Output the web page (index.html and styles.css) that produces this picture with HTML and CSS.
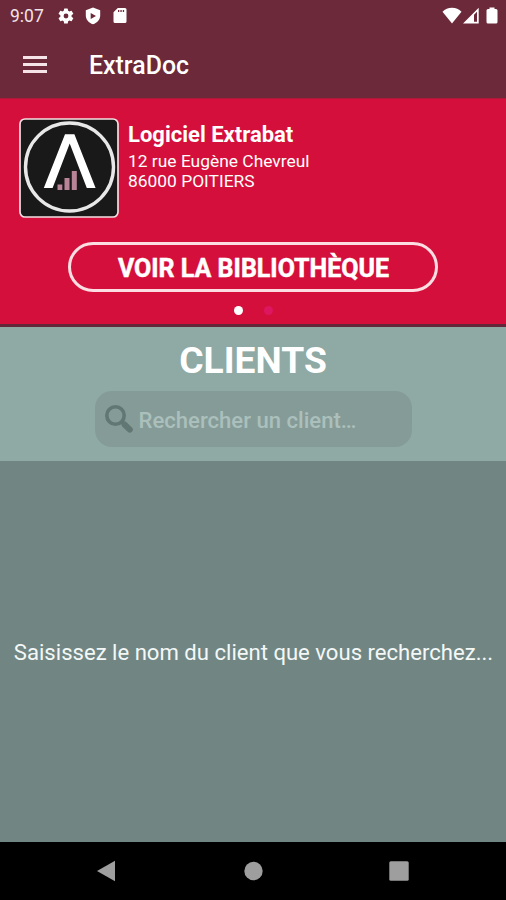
FILE: index.html
```html
<!DOCTYPE html>
<html lang="fr">
<head>
  <meta charset="UTF-8">
  <meta name="viewport" content="width=device-width, initial-scale=1.0">
  <title>ExtraDoc</title>
  <link rel="stylesheet" href="styles.css">
</head>
<body>
  <header class="top">
    <div class="status-bar">
      <span class="clock">9:07</span>
      <svg class="icon-gear" width="18" height="18" viewBox="0 0 24 24"><path d="M19.4 13a7.500 7.500 0 0 0 0-2l2.100-1.600a.5.5 0 0 0 .1-.7l-2-3.400a.5.5 0 0 0-.6-.2l-2.500 1a7.300 7.300 0 0 0-1.700-1l-.4-2.600a.5.5 0 0 0-.5-.5h-4a.5.5 0 0 0-.5.5L9 5.100a7.300 7.300 0 0 0-1.700 1l-2.500-1a.5.5 0 0 0-.6.200l-2 3.400a.5.5 0 0 0 .1.700L4.500 11a7.500 7.500 0 0 0 0 2l-2.200 1.600a.5.5 0 0 0-.1.700l2 3.400c.1.200.4.300.6.200l2.500-1a7.300 7.300 0 0 0 1.700 1l.4 2.600c0 .3.200.5.500.5h4c.3 0 .5-.2.500-.5l.4-2.600a7.300 7.300 0 0 0 1.700-1l2.500 1c.2.100.5 0 .6-.2l2-3.400a.5.500 0 0 0-.1-.7zM12 15.200a3.200 3.200 0 1 1 0-6.400 3.200 3.200 0 0 1 0 6.400z"/></svg>
      <svg class="icon-shield" width="16" height="18" viewBox="0 0 16 18"><path fill-rule="evenodd" d="M8 .5l7.200 2.700v5.300c0 4-2.800 7.300-7.200 8.800-4.400-1.500-7.200-4.800-7.200-8.800V3.200zM5.700 6v6L11 9z"/></svg>
      <svg class="icon-card" width="14" height="17" viewBox="0 0 14 17"><path fill-rule="evenodd" d="M4.800 1H12a1.500 1.500 0 0 1 1.500 1.500v12A1.500 1.500 0 0 1 12 16H2a1.500 1.500 0 0 1-1.500-1.500V5.300zM5 3v2h1.300V3zm2.400 0v2h1.300V3zm2.400 0v2h1.300V3z"/></svg>
      <svg class="icon-wifi" width="20" height="17" viewBox="0 0 20 17"><path d="M10 16.500L.5 4.800C3 2.300 6.200.8 10 .8s7 1.500 9.500 4z"/></svg>
      <svg class="icon-signal" width="16" height="17" viewBox="0 0 16 17"><path fill-rule="evenodd" d="M0 16.500L15.700.8v15.700zM11 7.800v6.900h3V4.800z"/></svg>
      <svg class="icon-battery" width="12" height="17" viewBox="0 0 12 17"><path d="M3.500.5h5V2H10a1.500 1.500 0 0 1 1.500 1.500V15a1.500 1.500 0 0 1-1.500 1.500H2A1.500 1.500 0 0 1 .5 15V3.500A1.500 1.500 0 0 1 2 2h1.500z"/></svg>
    </div>
    <div class="app-bar">
      <button class="menu-btn" aria-label="Menu"><span></span><span></span><span></span></button>
      <span class="app-title">ExtraDoc</span>
    </div>
  </header>

  <section class="company">
    <div class="company-card">
      <svg class="logo" viewBox="0 0 100 100">
        <rect x="1" y="1" width="98" height="98" rx="5" fill="#191919" stroke="#f3dfe2" stroke-width="1.700"/>
        <circle cx="50.500" cy="49" r="44" fill="none" stroke="#e8e8e8" stroke-width="3.400"/>
        <path d="M24.800 70L46 16.200h9.400L76.600 70h-8.800L50.700 25.500 33.600 70z" fill="#fff"/>
        <path d="M38.500 66.500h4.800V72h-4.800zM45.500 60h5v12h-5zM52.800 53h5v19h-5z" fill="#b98498"/>
      </svg>
      <div class="company-info">
        <div class="company-name">Logiciel Extrabat</div>
        <div class="company-street">12 rue Eugène Chevreul</div>
        <div class="company-city">86000 POITIERS</div>
      </div>
    </div>
    <button class="library-btn">VOIR LA BIBLIOTHÈQUE</button>
    <div class="dots">
      <span class="dot active"></span>
      <span class="dot"></span>
    </div>
  </section>

  <section class="clients">
    <h1>CLIENTS</h1>
    <div class="search">
      <svg width="30" height="30" viewBox="0 0 30 30" fill="none" stroke="#617773"><circle cx="11.500" cy="11.500" r="8.700" stroke-width="3.600"/><path d="M17.500 17.500l3 3" stroke-width="3"/><path d="M20.500 20.500l5.300 5.100" stroke-width="6" stroke-linecap="round"/></svg>
      <span class="placeholder">Rechercher un client…</span>
    </div>
  </section>

  <main class="results">
    <p>Saisissez le nom du client que vous recherchez...</p>
  </main>

  <nav class="nav-bar">
    <svg width="20" height="22" viewBox="0 0 20 22"><path d="M1 11L19 .8v20.400z"/></svg>
    <svg width="20" height="20" viewBox="0 0 20 20"><circle cx="10.500" cy="10" r="9.200"/></svg>
    <svg width="20" height="20" viewBox="0 0 20 20"><rect x=".3" y=".3" width="19.400" height="19.400" rx="1.500"/></svg>
  </nav>
</body>
</html>
```

FILE: styles.css
```css
* { box-sizing: border-box; }
html, body {
  margin: 0;
  padding: 0;
}
body {
  display: flex;
  flex-direction: column;
  height: 900px;
  overflow: hidden;
  font-family: Roboto, Arial, sans-serif;
  color: #fff;
  background: #718683;
}
button {
  font-family: inherit;
  color: inherit;
  background: none;
  border: none;
  padding: 0;
}
svg {
  display: block;
  flex-shrink: 0;
}
.top {
  height: 98px;
  background: #6b293a;
}
.status-bar {
  display: flex;
  align-items: center;
  height: 31px;
  padding: 0 8px 0 10px;
  fill: #fff;
}
.clock {
  width: 47px;
  font-size: 17.5px;
  color: #f3e3e7;
}
.icon-shield {
  margin-left: 10px;
}
.icon-card {
  margin-left: 12px;
}
.icon-wifi {
  margin-left: auto;
}
.icon-signal {
  margin-left: 1px;
}
.icon-battery {
  margin-left: 7px;
}
.app-bar {
  display: flex;
  align-items: center;
  height: 67px;
  padding-left: 23px;
}
.menu-btn {
  display: flex;
  flex-direction: column;
  gap: 4px;
  width: 24px;
}
.menu-btn span {
  height: 3px;
  background: #f5e3e8;
}
.app-title {
  margin-left: 42px;
  padding-top: 2px;
  font-size: 24.9px;
  font-weight: 500;
}
.company {
  display: flex;
  flex-direction: column;
  align-items: center;
  height: 229px;
  padding-top: 19px;
  background: #d50f3b;
  border-top: 1px solid #b01a3a;
  border-bottom: 3px solid #62283a;
}
.company-card {
  display: flex;
  align-self: stretch;
  height: 100px;
  padding-left: 19px;
}
.logo {
  width: 100px;
  height: 100px;
}
.company-info {
  padding: 4px 0 0 9px;
}
.company-name {
  font-size: 22px;
  font-weight: 700;
  line-height: 26px;
}
.company-street, .company-city {
  font-size: 17.4px;
  line-height: 20px;
}
.company-street {
  margin-top: 3px;
}
.library-btn {
  width: 370px;
  height: 50px;
  margin-top: 24px;
  padding: 2px 0 0 1px;
  border: 3px solid #fbdde2;
  border-radius: 25px;
  font-size: 25px;
  font-weight: 700;
  -webkit-text-stroke: 0.5px #fff;
}
.dots {
  display: flex;
  gap: 21px;
  margin-top: 14px;
}
.dot {
  width: 9px;
  height: 9px;
  border-radius: 50%;
  background: #dd1660;
}
.dot.active {
  background: #fff;
}
.clients {
  display: flex;
  flex-direction: column;
  align-items: center;
  height: 134px;
  background: #8fa9a4;
}
h1 {
  margin: 11px 0 0;
  font-size: 37.2px;
  line-height: 44px;
  font-weight: 700;
}
.search {
  display: flex;
  align-items: center;
  width: 317px;
  height: 56px;
  margin-top: 9px;
  padding-left: 9px;
  background: #859b97;
  border-radius: 17px;
}
.placeholder {
  margin-left: 5px;
  padding-top: 2px;
  font-size: 22.1px;
  font-weight: 500;
  color: #abc0bc;
}
.results {
  display: flex;
  flex: 1;
  align-items: center;
  justify-content: center;
}
.results p {
  margin: 0;
  padding: 1px 0 0 1px;
  font-size: 22.1px;
  white-space: nowrap;
  color: #f3f8f7;
}
.nav-bar {
  display: flex;
  align-items: center;
  justify-content: space-between;
  height: 58px;
  padding: 0 97px 0 96px;
  background: #000;
  fill: #9e9e9e;
}
```
